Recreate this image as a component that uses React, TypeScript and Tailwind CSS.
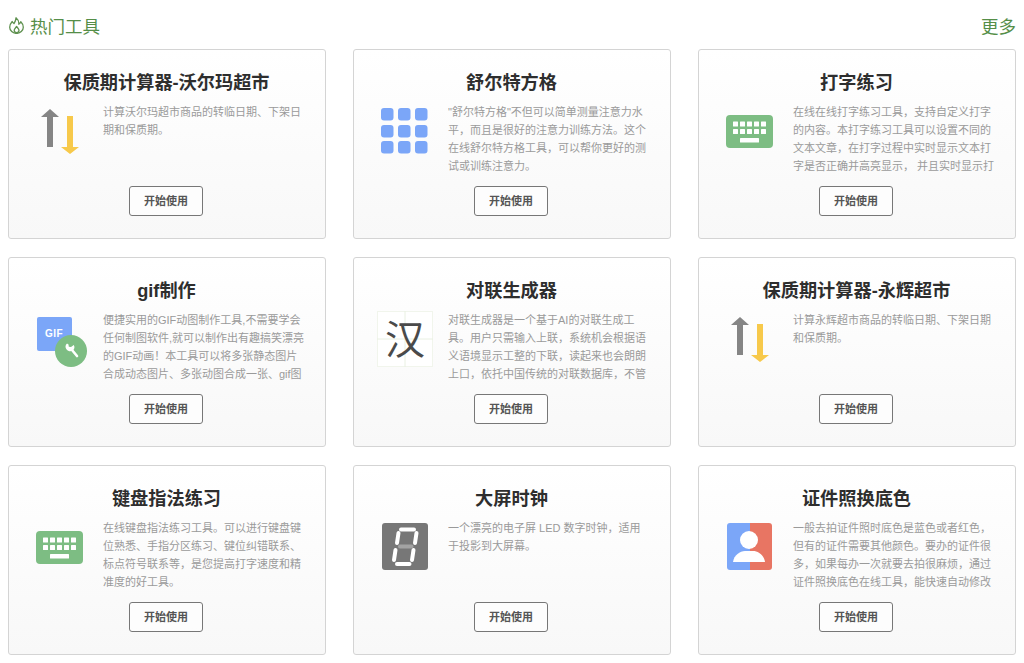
import React from "react";

const Arrows = () => (
  <svg width="48" height="48" viewBox="0 0 48 48">
    <path d="M14 2 L23 10 H17 V40 H11 V10 H5 Z" fill="#858585" />
    <path d="M34 47 L25 40 H31 V9 H37 V40 H43 Z" fill="#f7c94b" />
  </svg>
);

const GridIcon = () => (
  <svg width="48" height="48" viewBox="0 0 48 48">
    {[1, 18, 34].map((y) =>
      [0, 17, 34].map((x) => <rect key={`${x}-${y}`} x={x} y={y} width="12.5" height="12.5" rx="3" fill="#7ba6f8" />)
    )}
  </svg>
);

const KeyboardIcon = () => (
  <svg width="48" height="48" viewBox="0 0 48 48">
    <rect x="0" y="8" width="47" height="33" rx="4" fill="#7dbd83" />
    {[14.5, 22].map((y) =>
      [7, 14, 21, 28, 35].map((x) => <rect key={`${x}-${y}`} x={x} y={y} width="5" height="5" rx="0.5" fill="#fff" />)
    )}
    <rect x="14" y="31" width="19" height="4.5" rx="0.5" fill="#fff" />
  </svg>
);

const GifIcon = () => (
  <svg width="52" height="52" viewBox="0 0 52 52" className="overflow-visible">
    <rect x="1" y="2" width="35" height="34" rx="2" fill="#7ba6f8" />
    <text x="18" y="22" textAnchor="middle" fontSize="10" fontWeight="700" fill="#fff" fontFamily="Liberation Sans, sans-serif" letterSpacing="0.5">GIF</text>
    <circle cx="35" cy="36" r="16" fill="#7dbd83" />
    <path d="M36 35 L41 41" stroke="#fff" strokeWidth="2.6" strokeLinecap="round" />
    <path d="M31 28.5 a4.6 4.6 0 0 0 -0.6 5.8 a4.6 4.6 0 0 0 6.4 1.2 a4.6 4.6 0 0 0 1 -5.6 l-2.8 2.2 l-2.2 -0.4 l-0.3 -2.2 Z" fill="#fff" />
  </svg>
);

const HanIcon = () => (
  <div className="-ml-1 -mt-1">
    <svg width="56" height="56" viewBox="0 0 56 56">
      <rect x="0.5" y="0.5" width="55" height="55" fill="#fff" stroke="#f1f5ec" />
      <path d="M28 0 V56 M0 28 H56" stroke="#e9f0e2" strokeWidth="1" />
      <text x="28" y="43" textAnchor="middle" fontSize="40" fill="#4a4a4a" fontFamily="'Noto Sans CJK SC', sans-serif">汉</text>
    </svg>
  </div>
);

const ClockIcon = () => (
  <svg width="48" height="48" viewBox="0 0 48 48">
    <rect x="1" y="0" width="46" height="47" rx="3" fill="#777" />
    <g stroke="#fff" strokeWidth="4" strokeLinecap="round" fill="none">
      <path d="M20 6.5 H33" />
      <path d="M17.5 10 L16 20" />
      <path d="M35.5 10 L34 20" />
      <path d="M14.5 27 L13 37" />
      <path d="M32.5 27 L31 37" />
      <path d="M16 41 H28.5" />
    </g>
    <path d="M19 23.5 H30.5" stroke="#a3a3a3" strokeWidth="4" strokeLinecap="round" />
  </svg>
);

const IdIcon = () => (
  <svg width="48" height="48" viewBox="0 0 48 48">
    <path d="M24 0 H4 a3 3 0 0 0 -3 3 V44 a3 3 0 0 0 3 3 H24 Z" fill="#7ba6f8" />
    <path d="M24 0 H43 a3 3 0 0 1 3 3 V44 a3 3 0 0 1 -3 3 H24 Z" fill="#e87563" />
    <circle cx="23" cy="17" r="9" fill="#fff" />
    <path d="M7 39 C8 32 14 28 19 28 H27 C32 28 38 32 39 39 Z" fill="#fff" />
  </svg>
);

const tools = [
  { title: "保质期计算器-沃尔玛超市", icon: <Arrows />, desc: "计算沃尔玛超市商品的转临日期、下架日期和保质期。" },
  { title: "舒尔特方格", icon: <GridIcon />, desc: "\"舒尔特方格\"不但可以简单测量注意力水平，而且是很好的注意力训练方法。这个在线舒尔特方格工具，可以帮你更好的测试或训练注意力。" },
  { title: "打字练习", icon: <KeyboardIcon />, desc: "在线在线打字练习工具，支持自定义打字的内容。本打字练习工具可以设置不同的文本文章，在打字过程中实时显示文本打字是否正确并高亮显示， 并且实时显示打" },
  { title: "gif制作", icon: <GifIcon />, desc: "便捷实用的GIF动图制作工具,不需要学会任何制图软件,就可以制作出有趣搞笑漂亮的GIF动画！本工具可以将多张静态图片合成动态图片、多张动图合成一张、gif图" },
  { title: "对联生成器", icon: <HanIcon />, desc: "对联生成器是一个基于AI的对联生成工具。用户只需输入上联，系统机会根据语义语境显示工整的下联，读起来也会朗朗上口，依托中国传统的对联数据库，不管" },
  { title: "保质期计算器-永辉超市", icon: <Arrows />, desc: "计算永辉超市商品的转临日期、下架日期和保质期。" },
  { title: "键盘指法练习", icon: <KeyboardIcon />, desc: "在线键盘指法练习工具。可以进行键盘键位熟悉、手指分区练习、键位纠错联系、标点符号联系等，是您提高打字速度和精准度的好工具。" },
  { title: "大屏时钟", icon: <ClockIcon />, desc: "一个漂亮的电子屏 LED 数字时钟，适用于投影到大屏幕。" },
  { title: "证件照换底色", icon: <IdIcon />, desc: "一般去拍证件照时底色是蓝色或者红色，但有的证件需要其他颜色。要办的证件很多，如果每办一次就要去拍很麻烦，通过证件照换底色在线工具，能快速自动修改" },
];

export default function App() {
  return (
    <div className="w-[1024px] h-[663px] overflow-hidden bg-white font-['Liberation_Sans','Noto_Sans_CJK_SC',sans-serif]">
      <div className="h-[49px] pl-[9px] pr-[8px] pt-[17px] flex items-start justify-between text-[17.5px] leading-[20px] text-[#558e48]">
        <div className="flex items-center gap-[6px]">
          <svg width="15" height="17" viewBox="0 0 15 17" fill="none" stroke="#5f9150" strokeWidth="1.3" strokeLinejoin="round" strokeLinecap="round" className="-mt-[3px]">
            <path d="M3.2 4.5 C1.6 6.3 0.7 8.2 0.7 10.2 a6.8 6.2 0 0 0 13.6 0 C14.3 8 13.2 6.2 11.8 4.8 C11.3 6 10.6 6.8 9.8 7.2 C10 4.8 9 2.4 7 0.8 C7 3.2 6 5 5 6.6 C4.2 6 3.6 5.3 3.2 4.5 Z" />
            <path d="M7.6 9.5 C6.5 11 5.2 11.8 5.2 13.3 a2.4 2.4 0 0 0 4.8 0 C10 11.8 8.7 11 7.6 9.5 Z" />
          </svg>
          <span>热门工具</span>
        </div>
        <span>更多</span>
      </div>
      <div className="pl-[8px] grid grid-cols-[repeat(3,318px)] gap-x-[27px] gap-y-[18px]">
        {tools.map((t) => (
          <div
            key={t.title}
            className="h-[190px] box-border border border-[#d4d4d4] rounded-[3px] bg-gradient-to-b from-white to-[#f8f8f8] flex flex-col items-center pt-[21px]"
          >
            <h3 className="h-[24px] text-[18.2px] leading-[24px] font-bold text-[#2e2e2e] text-center -ml-px">{t.title}</h3>
            <div className="w-full flex mt-[8px] h-[72px]">
              <div className="ml-[27px] w-[48px] h-[48px] mt-[4px] shrink-0">{t.icon}</div>
              <p className="ml-[19px] w-[203px] h-[72px] overflow-hidden text-[11px] leading-[18px] text-[#9a9a9a]">{t.desc}</p>
            </div>
            <button className="mt-[11px] -ml-[2px] w-[74px] h-[30px] box-border border border-[#777] rounded-[3px] text-[11px] font-bold text-[#555] bg-white/60">
              开始使用
            </button>
          </div>
        ))}
      </div>
    </div>
  );
}
